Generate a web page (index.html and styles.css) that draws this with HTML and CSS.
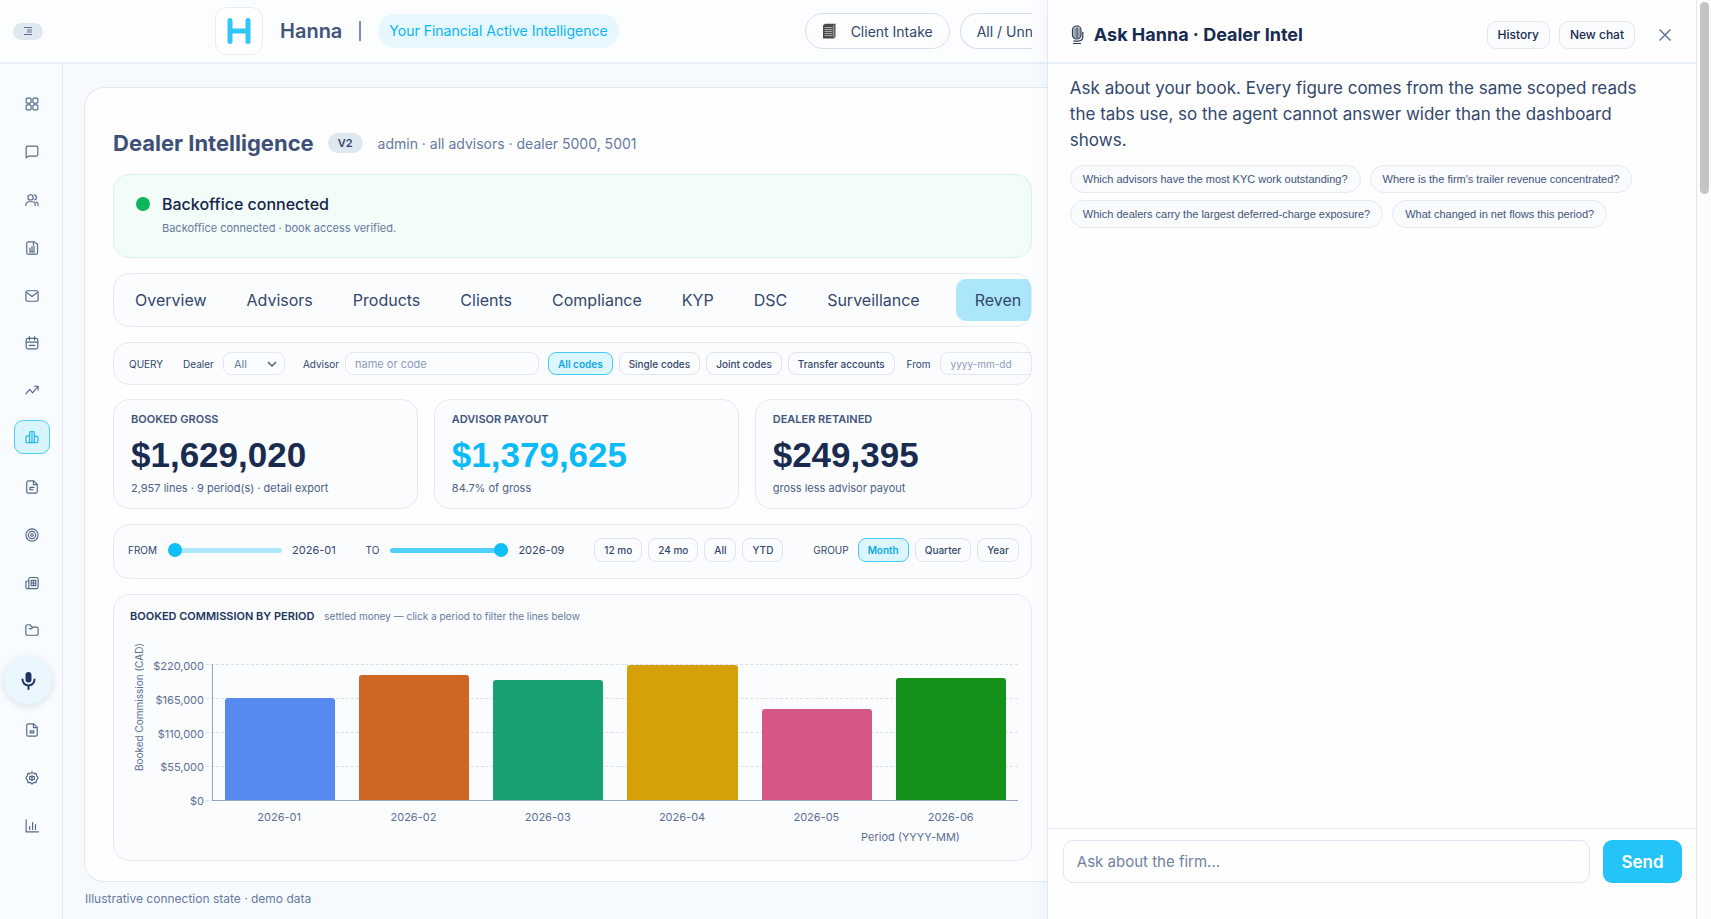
FILE: index.html
```html
<!DOCTYPE html>
<html lang="en">
<head>
    <meta charset="UTF-8">
    <meta name="viewport" content="width=device-width, initial-scale=1.0">
    <title>Hanna - Dealer Intelligence</title>
    <link rel="stylesheet" href="styles.css">
</head>
<body>
    <div class="app">
        <div class="workspace">
            <header class="topbar">
                <div class="topbar-inner">
                    <button type="button" class="menu-toggle" aria-label="Toggle menu">
                        <svg width="10" height="10" viewBox="0 0 10 10"><path d="M1 1.500h8M4 4h5M4 6h5M1 8.500h8" /></svg>
                    </button>
                    <div class="logo">
                        <svg width="26" height="28" viewBox="0 0 26 28"><path d="M4 3.500v21M22 3.500v21M4 14h18" /></svg>
                    </div>
                    <span class="brand">Hanna</span>
                    <span class="divider"></span>
                    <span class="tagline">Your Financial Active Intelligence</span>
                    <div class="top-actions">
                        <button type="button" class="top-btn">
                            <svg width="14" height="16" viewBox="0 0 14 16">
                                <path d="M1 2.500 3 .8h10.500v13L12 15.500H1z" fill="#4a4a4c" />
                                <path d="M2.500 4.500h8M2.500 6.500h8M2.500 8.500h8M2.500 10.500h8M2.500 12.500h8" stroke="#b5b5b8" stroke-width=".9" />
                                <path d="M11.800 2v12.500" stroke="#d8d8da" stroke-width=".7" />
                            </svg>
                            Client Intake
                        </button>
                        <button type="button" class="top-btn cut">All / Unn</button>
                    </div>
                </div>
            </header>

            <div class="body">
                <nav class="sidebar" aria-label="Main">
                    <div class="nav-group">
                        <a href="#" aria-label="Dashboard"><svg viewBox="0 0 24 24"><rect x="2" y="2" width="8.500" height="8.500" rx="2" /><rect x="13.500" y="2" width="8.500" height="8.500" rx="2" /><rect x="2" y="13.500" width="8.500" height="8.500" rx="2" /><rect x="13.500" y="13.500" width="8.500" height="8.500" rx="2" /></svg></a>
                        <a href="#" aria-label="Messages"><svg viewBox="0 0 24 24"><path d="M2 22V5a3 3 0 0 1 3-3h14a3 3 0 0 1 3 3v11a3 3 0 0 1-3 3H5.500z" /></svg></a>
                        <a href="#" aria-label="Clients"><svg viewBox="0 0 24 24"><circle cx="9.500" cy="7.500" r="4.500" /><path d="M1.500 21.500v-1.500a5 5 0 0 1 5-5h6a5 5 0 0 1 5 5v1.500M16.500 3.200a4.500 4.500 0 0 1 0 8.600M22.500 21.500V20a5 5 0 0 0-3.500-4.800" /></svg></a>
                        <a href="#" aria-label="Reports"><svg viewBox="0 0 24 24"><path d="M5.500 1.500H16L21.500 6v14a2.500 2.500 0 0 1-2.500 2.500H5.500A2.500 2.500 0 0 1 3 20V4a2.500 2.500 0 0 1 2.500-2.500z" /><path d="M8.500 18.500V12M12 18.500V9M15.500 18.500V9M8 18.500h8M14.500 3v4" /></svg></a>
                    </div>
                    <div class="nav-group compact">
                        <a href="#" aria-label="Mail"><svg viewBox="0 0 24 24"><rect x="1.500" y="3" width="21" height="18" rx="3" /><path d="m3 6 9 7 9-7" /></svg></a>
                        <a href="#" aria-label="Calendar"><svg viewBox="0 0 24 24"><rect x="2" y="4" width="20" height="18" rx="3" /><path d="M2 10.500h20M7.500 1v6M16.500 1v6M7 16h10" /></svg></a>
                        <a href="#" aria-label="Trends"><svg viewBox="0 0 24 24"><path d="M1.500 18.500 8 11l5 6 9-11M16 5.500h6.500V12" /></svg></a>
                    </div>
                    <div class="nav-group">
                        <a href="#" class="active" aria-label="Dealer Intelligence"><svg viewBox="0 0 24 24"><path d="M8 21.500V4.500a2 2 0 0 1 2-2h4a2 2 0 0 1 2 2v17zM8 10H4.500a3 3 0 0 0-3 3v6a2.500 2.500 0 0 0 2.500 2.500h15.500a3 3 0 0 0 3-3V14a3 3 0 0 0-3-3H16M12 3v18" /></svg></a>
                        <a href="#" aria-label="Notes"><svg viewBox="0 0 24 24"><path d="M5.500 1.500H15L21 7.500V20a2.500 2.500 0 0 1-2.500 2.500h-13A2.500 2.500 0 0 1 3 20V4a2.500 2.500 0 0 1 2.500-2.500zM14.500 2v6H20M8.500 12.500h7M8.500 16.500h5M8.500 12.500v4" /></svg></a>
                        <a href="#" aria-label="Goals"><svg viewBox="0 0 24 24"><circle cx="12" cy="12" r="10.500" /><circle cx="12" cy="12" r="6.300" /><circle cx="12" cy="12" r="2.200" /></svg></a>
                    </div>
                    <div class="nav-group compact">
                        <a href="#" aria-label="News"><svg viewBox="0 0 24 24"><path d="M6.500 5A2.500 2.500 0 0 1 9 2.500h11A2.500 2.500 0 0 1 22.500 5v14a2.500 2.500 0 0 1-2.500 2.500H4A2.500 2.500 0 0 1 1.500 19v-8.500a2 2 0 0 1 2-2h3zM6.500 8.500V21M10.500 7.500h8v9h-8zM10.500 12h8M14.500 7.500v9" /></svg></a>
                        <a href="#" aria-label="Files"><svg viewBox="0 0 24 24"><path d="M1.500 18.500v-13A2.500 2.500 0 0 1 4 3h4.500L12 7h8a2.500 2.500 0 0 1 2.500 2.500v9A2.500 2.500 0 0 1 20 21H4a2.500 2.500 0 0 1-2.500-2.500zM7 9.500l3 1L14 7" /></svg></a>
                    </div>
                    <button type="button" class="mic-btn" aria-label="Talk to Hanna">
                        <svg width="17" height="19" viewBox="0 0 17 19"><rect x="5.500" y="1" width="6" height="10.500" rx="3" /><path d="M2.500 8.500a6 6 0 0 0 12 0M8.500 14.500v3.500" /></svg>
                    </button>
                    <div class="nav-group">
                        <a href="#" aria-label="Documents"><svg viewBox="0 0 24 24"><path d="M5.500 1.500H15l6 6V20a2.500 2.500 0 0 1-2.500 2.500h-13A2.500 2.500 0 0 1 3 20V4a2.500 2.500 0 0 1 2.500-2.500zM14.500 2v6H20M9 13.500h6V17H9z" /></svg></a>
                        <a href="#" aria-label="Settings"><svg viewBox="0 0 24 24"><path d="M12 1.500 15 4.500l4-.5.800 4L22.500 12l-2.700 4-.800 4-4-.5-3 3-3-3-4 .5-.800-4L1.500 12l2.700-4L5 4l4 .5z" /><path d="M8 9.500h8v5H8zM12 7v10" /></svg></a>
                        <a href="#" aria-label="Analytics"><svg viewBox="0 0 24 24"><path d="M2 1.500v20.500h21M8 18v-5M13 18V6M18 18V9.500" /></svg></a>
                    </div>
                </nav>

                <main class="main">
                    <section class="card">
                        <div class="page-head">
                            <h1>Dealer Intelligence</h1>
                            <span class="version">V2</span>
                            <span class="scope">admin · all advisors · dealer 5000, 5001</span>
                        </div>

                        <div class="status">
                            <span class="status-dot"></span>
                            <div>
                                <h2>Backoffice connected</h2>
                                <p>Backoffice connected · book access verified.</p>
                            </div>
                        </div>

                        <div class="tabs">
                            <button type="button">Overview</button>
                            <button type="button">Advisors</button>
                            <button type="button">Products</button>
                            <button type="button">Clients</button>
                            <button type="button">Compliance</button>
                            <button type="button">KYP</button>
                            <button type="button">DSC</button>
                            <button type="button">Surveillance</button>
                            <button type="button" class="active">Reven</button>
                        </div>

                        <form class="query">
                            <span class="query-title">QUERY</span>
                            <label for="dealer">Dealer</label>
                            <div class="select">
                                <select id="dealer">
                                    <option>All</option>
                                </select>
                                <svg width="10" height="6" viewBox="0 0 10 6"><path d="m1 1 4 4 4-4" /></svg>
                            </div>
                            <label for="advisor">Advisor</label>
                            <input type="text" id="advisor" class="advisor-input" placeholder="name or code">
                            <div class="chips">
                                <button type="button" class="chip active">All codes</button>
                                <button type="button" class="chip">Single codes</button>
                                <button type="button" class="chip">Joint codes</button>
                                <button type="button" class="chip">Transfer accounts</button>
                            </div>
                            <label for="from-date">From</label>
                            <input type="text" id="from-date" class="date-input" placeholder="yyyy-mm-dd">
                        </form>

                        <div class="kpis">
                            <div class="kpi">
                                <h3>BOOKED GROSS</h3>
                                <p class="kpi-value">$1,629,020</p>
                                <p class="kpi-note">2,957 lines · 9 period(s) · detail export</p>
                            </div>
                            <div class="kpi">
                                <h3>ADVISOR PAYOUT</h3>
                                <p class="kpi-value accent">$1,379,625</p>
                                <p class="kpi-note">84.7% of gross</p>
                            </div>
                            <div class="kpi">
                                <h3>DEALER RETAINED</h3>
                                <p class="kpi-value">$249,395</p>
                                <p class="kpi-note">gross less advisor payout</p>
                            </div>
                        </div>

                        <div class="range-bar">
                            <div class="range">
                                <label for="range-from">FROM</label>
                                <input type="range" id="range-from" min="0" max="8" value="0">
                                <output for="range-from">2026-01</output>
                            </div>
                            <div class="range range-to">
                                <label for="range-to">TO</label>
                                <input type="range" id="range-to" min="0" max="8" value="8">
                                <output for="range-to">2026-09</output>
                            </div>
                            <div class="chips">
                                <button type="button" class="chip">12 mo</button>
                                <button type="button" class="chip">24 mo</button>
                                <button type="button" class="chip">All</button>
                                <button type="button" class="chip">YTD</button>
                            </div>
                            <div class="chips">
                                <span class="group-label">GROUP</span>
                                <button type="button" class="chip active">Month</button>
                                <button type="button" class="chip">Quarter</button>
                                <button type="button" class="chip">Year</button>
                            </div>
                        </div>

                        <div class="chart-card">
                            <div class="chart-head">
                                <h3>BOOKED COMMISSION BY PERIOD</h3>
                                <p>settled money — click a period to filter the lines below</p>
                            </div>
                            <div class="chart">
                                <span class="y-title">Booked Commission (CAD)</span>
                                <div class="y-ticks">
                                    <span>$220,000</span>
                                    <span>$165,000</span>
                                    <span>$110,000</span>
                                    <span>$55,000</span>
                                    <span>$0</span>
                                </div>
                                <div class="grid-lines"><i></i><i></i><i></i><i></i><i></i></div>
                                <div class="bars">
                                    <div class="bar blue" style="height: 75%"></div>
                                    <div class="bar orange" style="height: 92%"></div>
                                    <div class="bar teal" style="height: 88%"></div>
                                    <div class="bar gold" style="height: 99%"></div>
                                    <div class="bar pink" style="height: 67%"></div>
                                    <div class="bar green" style="height: 90%"></div>
                                </div>
                                <div class="x-ticks">
                                    <span>2026-01</span>
                                    <span>2026-02</span>
                                    <span>2026-03</span>
                                    <span>2026-04</span>
                                    <span>2026-05</span>
                                    <span>2026-06</span>
                                </div>
                                <span class="x-title">Period (YYYY-MM)</span>
                            </div>
                        </div>
                    </section>
                    <p class="footnote">Illustrative connection state · demo data</p>
                </main>
            </div>
        </div>

        <aside class="panel">
            <header class="panel-head">
                <svg width="14" height="20" viewBox="0 0 14 20">
                    <rect x="2.500" y="1" width="8.500" height="13" rx="4" fill="#dfe4ea" stroke="#2c3a52" stroke-width="1.200" />
                    <path d="M4 4h6M3.500 6h7M3.500 8h7M3.500 10h7M4 12h6M7 1.500v12" stroke="#2c3a52" stroke-width=".8" fill="none" />
                    <path d="M12.800 7v5c0 2.500-2 4-5 4.200H3.500M3 18.500h8" stroke="#2c3a52" stroke-width="1.200" fill="none" />
                </svg>
                <h2>Ask Hanna · Dealer Intel</h2>
                <button type="button" class="panel-btn">History</button>
                <button type="button" class="panel-btn">New chat</button>
                <button type="button" class="close-btn" aria-label="Close">
                    <svg width="14" height="14" viewBox="0 0 14 14"><path d="m1.500 1.500 11 11M12.500 1.500l-11 11" /></svg>
                </button>
            </header>
            <div class="panel-body">
                <p>Ask about your book. Every figure comes from the same scoped reads the tabs use, so the agent cannot answer wider than the dashboard shows.</p>
                <div class="prompts">
                    <button type="button">Which advisors have the most KYC work outstanding?</button>
                    <button type="button">Where is the firm's trailer revenue concentrated?</button>
                    <button type="button">Which dealers carry the largest deferred-charge exposure?</button>
                    <button type="button">What changed in net flows this period?</button>
                </div>
            </div>
            <form class="composer">
                <input type="text" aria-label="Ask about the firm" placeholder="Ask about the firm...">
                <button type="submit">Send</button>
            </form>
        </aside>
        <div class="scroll-track"><div class="scroll-thumb"></div></div>
    </div>
</body>
</html>
```

FILE: styles.css
```css
*, ::before, ::after {
    margin: 0;
    padding: 0;
    box-sizing: border-box;
}

body {
    font-family: Inter, "Liberation Sans", sans-serif;
    color: #33476b;
    background-color: #f7fafd;
}

button, input, select {
    font-family: inherit;
    color: inherit;
    background: none;
    border: none;
}

button {
    cursor: pointer;
    white-space: nowrap;
}

svg {
    flex-shrink: 0;
    fill: none;
}

.app {
    display: grid;
    grid-template-columns: minmax(0, 1fr) 38% 14px;
    min-height: 100vh;
}

.workspace {
    display: flex;
    flex-direction: column;
    min-width: 0;
}

/* top bar */
.topbar {
    height: 64px;
    padding-right: 15px;
    background-color: #fcfdff;
    border-bottom: 2px solid #e8eff6;
}

.topbar-inner {
    display: flex;
    align-items: center;
    height: 62px;
    padding-left: 13px;
    overflow: hidden;
}

.menu-toggle {
    display: flex;
    flex-shrink: 0;
    justify-content: center;
    align-items: center;
    width: 30px;
    height: 17px;
    border-radius: 9px;
    background-color: #dfe7f0;
}

.menu-toggle svg {
    stroke: #5d7090;
}

.logo {
    display: flex;
    flex-shrink: 0;
    justify-content: center;
    align-items: center;
    width: 48px;
    height: 48px;
    margin-left: 172px;
    border: 1px solid #e6ecf6;
    border-radius: 12px;
    background-color: #fff;
}

.logo svg {
    stroke: #30c6f8;
    stroke-width: 5;
    stroke-linecap: round;
}

.brand {
    margin-left: 17px;
    font-size: 20px;
    font-weight: 600;
    color: #42547a;
}

.divider {
    flex-shrink: 0;
    width: 2px;
    height: 20px;
    margin: 0 17px;
    background-color: #7d8fae;
}

.tagline {
    padding: 0 11px;
    border-radius: 17px;
    background-color: #e6f8fe;
    color: #08b4f4;
    font-size: 14px;
    line-height: 34px;
    white-space: nowrap;
}

.top-actions {
    display: flex;
    flex: 1;
    gap: 10px;
    margin-left: 186px;
}

.top-btn {
    display: flex;
    align-items: center;
    gap: 15px;
    height: 36px;
    padding: 0 16px;
    border: 1px solid #d5e0ee;
    border-radius: 18px;
    font-size: 14px;
}

/* runs off the right edge of the bar */
.cut {
    flex: 1;
    padding-right: 0;
    border-right: none;
    border-radius: 18px 0 0 18px;
}

/* sidebar */
.body {
    display: flex;
    flex: 1;
}

.sidebar {
    flex-shrink: 0;
    width: 63px;
    padding-top: 16px;
    border-right: 1px solid #e2eaf4;
    background-color: #f9fcff;
}

.nav-group a {
    display: flex;
    justify-content: center;
    align-items: center;
    width: 36px;
    height: 34px;
    margin: 0 auto 14px 14px;
    border: 1px solid transparent;
    border-radius: 9px;
    color: #566789;
}

.nav-group:first-child {
    padding-top: 7px;
}

.compact a {
    margin-bottom: 13px;
}

.nav-group svg {
    width: 14px;
    height: 14px;
    stroke: currentColor;
    stroke-width: 2;
    stroke-linecap: round;
    stroke-linejoin: round;
}

.nav-group .active {
    margin-bottom: 16px;
    border-color: #4fd0f8;
    background-color: #d8f4fd;
    color: #1cb5ee;
}

.mic-btn {
    display: flex;
    justify-content: center;
    align-items: center;
    width: 48px;
    height: 48px;
    margin: -4px 0 9px 4px;
    border-radius: 50%;
    background-color: #eaf7ff;
    box-shadow: 0 2px 8px rgba(90, 115, 150, 0.2);
}

.mic-btn rect {
    fill: #1f3561;
}

.mic-btn path {
    stroke: #1f3561;
    stroke-width: 2;
    stroke-linecap: round;
}

/* main card */
.main {
    flex: 1;
    min-width: 0;
    padding: 23px 0 10px 21px;
}

.card {
    padding: 41px 15px 20px 28px;
    border: 1px solid #e0e8f3;
    border-right: none;
    border-radius: 20px 0 0 20px;
    background-color: #fefeff;
}

.page-head {
    display: flex;
    align-items: center;
    height: 28px;
    margin-bottom: 17px;
}

h1 {
    font-size: 22px;
    font-weight: 700;
    color: #3d5078;
}

.version {
    margin: 0 15px 0 14px;
    padding: 0 10px;
    border-radius: 10px;
    background-color: #dfe7f1;
    font-size: 11px;
    font-weight: 600;
    line-height: 20px;
}

.scope {
    font-size: 14px;
    color: #667a9e;
}

.status {
    display: flex;
    gap: 12px;
    height: 84px;
    margin-bottom: 15px;
    padding: 17px 22px;
    border: 1px solid #daf3e8;
    border-radius: 16px;
    background-color: #f2fcf8;
}

.status-dot {
    width: 14px;
    height: 14px;
    margin-top: 5px;
    border-radius: 50%;
    background-color: #0fb45b;
}

.status h2 {
    font-size: 16px;
    font-weight: 500;
    line-height: 24px;
    color: #14244a;
}

.status p {
    margin-top: 4px;
    font-size: 11px;
    line-height: 16px;
    color: #667a9e;
}

.tabs, .query, .range-bar, .kpi, .chart-card {
    border: 1px solid #e4eaf4;
    border-radius: 16px;
    background-color: #fbfcfe;
}

.tabs {
    display: flex;
    align-items: center;
    height: 54px;
    margin-bottom: 15px;
    padding-left: 1px;
    overflow: hidden;
}

.tabs button {
    height: 42px;
    padding: 0 20px;
    font-size: 16px;
}

.tabs .active {
    flex: 1;
    margin-left: 16px;
    padding: 0 0 0 19px;
    border-radius: 10px 0 0 10px;
    background-color: #abe6fa;
    text-align: left;
}

/* query row */
.query {
    display: flex;
    align-items: center;
    height: 43px;
    margin-bottom: 14px;
    padding-left: 15px;
    overflow: hidden;
    font-size: 10px;
}

.query label {
    margin-left: 18px;
}

.query .query-title + label {
    margin-left: 20px;
}

.query input, .select {
    flex-shrink: 0;
    height: 23px;
    border: 1px solid #e1e8f2;
    border-radius: 8px;
    font-size: 10px;
}

.select {
    display: grid;
    align-items: center;
    width: 62px;
    margin-left: 9px;
}

.select select, .select svg {
    grid-area: 1 / 1;
}

.select select {
    height: 21px;
    padding-left: 10px;
    appearance: none;
    font-size: 11px;
    color: #667a9e;
}

.select svg {
    justify-self: end;
    margin-right: 7px;
    stroke: #4b5f85;
    stroke-width: 1.5;
    pointer-events: none;
}

.query .advisor-input {
    width: 194px;
    margin: 0 9px 0 6px;
    padding-left: 9px;
    font-size: 11px;
}

.query .chips + label {
    margin-left: 12px;
}

.query .date-input {
    width: 110px;
    margin-left: 9px;
    padding-left: 10px;
}

::placeholder {
    color: #8c9bb8;
    opacity: 1;
}

.chips {
    display: flex;
    align-items: center;
    gap: 6px;
}

.chip {
    height: 23px;
    padding: 0 9px;
    border: 1px solid #dde5f0;
    border-radius: 8px;
    font-size: 10px;
    font-weight: 500;
}

.chip.active {
    border-color: #45cbf7;
    background-color: #dbf6fe;
    color: #0aa8ea;
    font-weight: 600;
}

/* totals */
.kpis {
    display: grid;
    grid-template-columns: 11fr 11fr 10fr;
    gap: 16px;
    margin-bottom: 15px;
}

.kpi {
    height: 110px;
    padding: 10px 17px;
}

.kpi h3 {
    font-size: 11px;
    font-weight: 600;
    line-height: 18px;
    color: #42547a;
}

.kpi-value {
    font-family: "Liberation Sans", sans-serif;
    font-size: 35px;
    font-weight: bold;
    line-height: 40px;
    margin: 7px 0 5px;
    color: #1a2b50;
}

.kpi-value.accent {
    color: #0bbbf8;
}

.kpi-note {
    font-size: 11px;
    line-height: 16px;
    color: #4c5f85;
}

/* period range */
.range-bar {
    display: flex;
    justify-content: space-between;
    align-items: center;
    height: 55px;
    margin-bottom: 15px;
    padding: 0 12px 3px 14px;
    font-size: 10px;
}

.range {
    display: flex;
    align-items: center;
}

.range output {
    margin-left: 10px;
    font-size: 11px;
}

input[type="range"] {
    width: 114px;
    height: 14px;
    margin-left: 11px;
    appearance: none;
}

input[type="range"]::-webkit-slider-runnable-track {
    height: 5px;
    border-radius: 3px;
    background-color: #aee7fb;
}

.range-to input[type="range"] {
    width: 118px;
}

.range-to input[type="range"]::-webkit-slider-runnable-track {
    background-color: #50d0fa;
}

input[type="range"]::-webkit-slider-thumb {
    width: 14px;
    height: 14px;
    margin-top: -5px;
    appearance: none;
    border-radius: 50%;
    background-color: #10bff6;
}

.range-bar .chip {
    height: 24px;
}

.group-label {
    margin-right: 3px;
}

/* chart */
.chart-card {
    padding: 12px 13px 19px 16px;
}

.chart-head {
    display: flex;
    align-items: center;
    gap: 10px;
    height: 18px;
    color: #667a9e;
    font-size: 10px;
}

.chart-head h3 {
    font-size: 11px;
    font-weight: 600;
    color: #22345c;
}

.chart {
    display: grid;
    grid-template-columns: 20px 62px 1fr;
    grid-template-rows: 39px 137px 32px 8px;
    color: #5c6f94;
    font-size: 11px;
}

.y-title {
    grid-area: 1 / 1 / 3 / 2;
    align-self: end;
    margin: 0 0 30px 3px;
    writing-mode: vertical-rl;
    transform: rotate(180deg);
    white-space: nowrap;
    font-size: 10px;
}

.y-ticks {
    display: flex;
    grid-area: 2 / 2;
    flex-direction: column;
    justify-content: space-between;
    margin: -6px 8px -8px 0;
    text-align: right;
    line-height: 16px;
}

.grid-lines {
    display: flex;
    grid-area: 2 / 3;
    flex-direction: column;
    justify-content: space-between;
    margin-left: -6px;
}

.grid-lines i {
    border-top: 1px dashed #d6e0ec;
}

.bars {
    display: grid;
    grid-area: 2 / 3;
    grid-template-columns: repeat(6, 1fr);
    align-items: end;
    border-left: 1px solid #93a5c2;
    border-bottom: 1px solid #93a5c2;
}

.bar {
    margin: 0 12px;
    border-radius: 3px 3px 0 0;
}

.blue {
    background-color: #568aef;
}

.orange {
    background-color: #cf6724;
}

.teal {
    background-color: #19a174;
}

.gold {
    background-color: #d5a009;
}

.pink {
    background-color: #d45786;
}

.green {
    background-color: #15921c;
}

.x-ticks {
    display: grid;
    grid-area: 3 / 3;
    grid-template-columns: repeat(6, 1fr);
    line-height: 32px;
    text-align: center;
}

.x-title {
    grid-area: 4 / 3;
    justify-self: end;
    margin-right: 58px;
    line-height: 8px;
}

.footnote {
    margin-top: 8px;
    padding-left: 1px;
    font-size: 12px;
    line-height: 18px;
    color: #667a9e;
}

/* chat panel */
.panel {
    display: flex;
    flex-direction: column;
    border-left: 1px solid #e0e8f2;
    border-right: 1px solid #e0e6ee;
    background-color: #fefeff;
    box-shadow: -6px 0 16px rgba(120, 145, 180, 0.06);
}

.panel-head {
    display: flex;
    align-items: center;
    height: 64px;
    padding: 7px 24px 0 22px;
    border-bottom: 2px solid #e9eff6;
    color: #172a50;
}

.panel-head h2 {
    margin: 0 auto 0 10px;
    font-size: 18px;
    font-weight: 700;
}

.panel-btn {
    height: 28px;
    margin-right: 9px;
    padding: 0 10px;
    border: 1px solid #e1e9f2;
    border-radius: 9px;
    background-color: #fafcfe;
    font-size: 12px;
    font-weight: 500;
}

.close-btn {
    display: flex;
    margin-left: 14px;
}

.close-btn svg {
    stroke: #64779b;
    stroke-width: 1.5;
}

.panel-body {
    flex: 1;
    padding: 11px 22px;
}

.panel-body p {
    padding-right: 30px;
    font-size: 17px;
    line-height: 26px;
}

.prompts {
    display: flex;
    flex-wrap: wrap;
    gap: 7px 9px;
    margin-top: 12px;
}

.prompts button {
    height: 28px;
    padding: 0 12px;
    border: 1px solid #e3eaf3;
    border-radius: 14px;
    background-color: #f9fbfd;
    font-family: "Liberation Sans", sans-serif;
    font-size: 11px;
    color: #42547a;
}

.composer {
    display: flex;
    gap: 13px;
    height: 91px;
    padding: 11px 14px 36px 15px;
    border-top: 1px solid #e4ebf4;
}

.composer input {
    flex: 1;
    padding: 0 13px;
    border: 1px solid #dfe6f1;
    border-radius: 10px;
    font-size: 15px;
}

.composer input::placeholder {
    color: #71829f;
}

.composer button {
    width: 79px;
    border-radius: 9px;
    background-color: #24c4f8;
    color: #fff;
    font-size: 17px;
    font-weight: 600;
}

.scroll-track {
    padding: 2px 2px 0 3px;
    background-color: #fcfcfc;
}

.scroll-thumb {
    height: 192px;
    border-radius: 5px;
    background-color: #c4c4c6;
}
```
